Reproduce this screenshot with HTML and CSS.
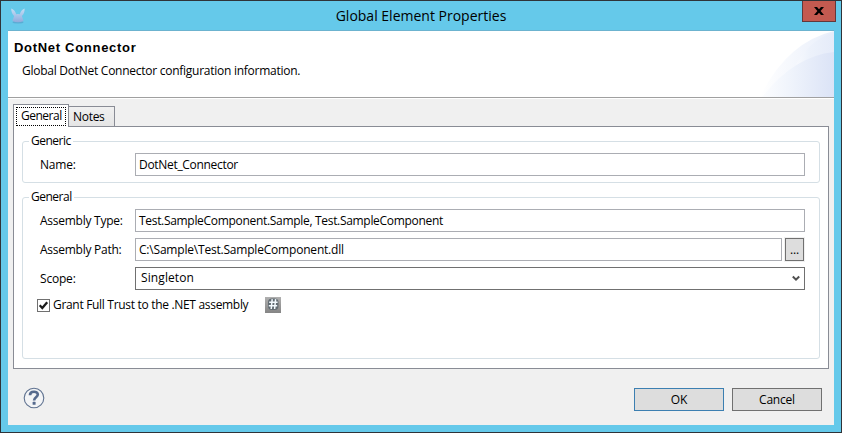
FILE: index.html
```html
<!DOCTYPE html>
<html lang="en">
<head>
<meta charset="utf-8">
<title>Global Element Properties</title>
<link rel="stylesheet" href="styles.css">
</head>
<body>
<div class="window">
  <header class="titlebar">
    <svg class="app-icon" width="16" height="16" viewBox="0 0 16 16">
      <defs><linearGradient id="mule" x1="0" y1="0" x2="0" y2="1"><stop offset="0" stop-color="#c3def6"/><stop offset="1" stop-color="#8fabdc"/></linearGradient></defs>
      <ellipse cx="8" cy="14.2" rx="5.5" ry="1.2" fill="#5299c4" opacity=".6"/>
      <path d="M1.2 .6C1.2 3.6 2.2 6.5 4.1 8L2.4 13Q8 15.5 13.6 13L11.9 8C13.8 6.5 14.8 3.6 14.6 .6C12 1.6 10.5 4 9.8 6.2Q8 5.6 6.2 6.2C5.5 4 4 1.6 1.2 .6Z" fill="url(#mule)"/>
    </svg>
    <h1 class="title">Global Element Properties</h1>
    <button class="close" aria-label="Close"><svg width="10" height="8" viewBox="0 0 10 8"><path d="M0 0H3L5 2.3L7 0H10L6.6 4L10 8H7L5 5.7L3 8H0L3.4 4Z" fill="#000"/></svg></button>
  </header>
  <main class="client">
    <section class="banner">
      <div>
        <h2 class="heading">DotNet Connector</h2>
        <p class="message">Global DotNet Connector configuration information.</p>
      </div>
      <svg class="swoosh" width="74" height="66" viewBox="0 0 74 66">
        <defs>
          <linearGradient id="g1"><stop offset="0" stop-color="#fff"/><stop offset="1" stop-color="#e8eefa"/></linearGradient>
          <linearGradient id="g2"><stop offset="0" stop-color="#fff"/><stop offset=".5" stop-color="#edf2fb"/><stop offset="1" stop-color="#e5ebf9"/></linearGradient>
          <linearGradient id="g3"><stop offset="0" stop-color="#fcfdff"/><stop offset=".35" stop-color="#f1f5fc"/><stop offset="1" stop-color="#dbe3f6"/></linearGradient>
        </defs>
        <path d="M0 66Q27 11 74 0V66Z" fill="url(#g1)"/>
        <path d="M25 66Q35 14 74 1V66Z" fill="url(#g2)"/>
        <path d="M2 66Q34 25 74 21V66Z" fill="url(#g3)"/>
      </svg>
    </section>
    <section class="body">
      <nav class="tabs">
        <div class="tab active"><span class="focus">General</span></div>
        <div class="tab"><span>Notes</span></div>
      </nav>
      <div class="pane">
        <fieldset class="group generic">
          <legend>Generic</legend>
          <label class="label">Name:</label>
          <div class="field tight">DotNet_Connector</div>
        </fieldset>
        <fieldset class="group general">
          <legend>General</legend>
          <label class="label snug">Assembly Type:</label>
          <div class="field tight">Test.SampleComponent.Sample, Test.SampleComponent</div>
          <label class="label snug">Assembly Path:</label>
          <div class="browse-row">
            <div class="field">C:\Sample\Test.SampleComponent.dll</div>
            <button class="browse">...</button>
          </div>
          <label class="label">Scope:</label>
          <div class="field combo"><span>Singleton</span>
            <svg width="8" height="7" viewBox="0 0 8 7"><path d="M.8 1.5L4 4.7L7.2 1.5" fill="none" stroke="#505050" stroke-width="2"/></svg>
          </div>
          <div class="check-row">
            <svg width="13" height="13" viewBox="0 0 13 13"><rect x=".5" y=".5" width="12" height="12" fill="#fff" stroke="#707070"/><path d="M2.7 6.3L5.3 9L10.2 3.3" fill="none" stroke="#1c1c1c" stroke-width="2.3"/></svg>
            <span class="check-label tight">Grant Full Trust to the .NET assembly</span>
            <svg class="hash" width="16" height="16" viewBox="0 0 16 16"><defs><linearGradient id="hg" x1="0" y1="0" x2="0" y2="1"><stop offset="0" stop-color="#b0b0b0"/><stop offset="1" stop-color="#858585"/></linearGradient></defs><rect width="16" height="16" fill="url(#hg)"/><rect x="3" y="1.5" width="10.5" height="11.5" rx="4" fill="#626c73"/><path d="M7.2 2.2L6.2 12M10.6 2.2L9.6 12M4.2 5.2H12.6M3.8 8.8H12.2" stroke="#f2faff" stroke-width="1.5" fill="none"/></svg>
          </div>
        </fieldset>
      </div>
    </section>
    <footer class="footer">
      <svg class="help" width="22" height="22" viewBox="0 0 22 22"><circle cx="11" cy="11" r="9.8" fill="#f3f4f6" stroke="#5f7290" stroke-width="1.1"/><path d="M7 8.2C7 3.7 14.8 3.7 14.8 7.6C14.8 10.2 11.1 10.3 11.1 13.4" fill="none" stroke="#566a8d" stroke-width="2.7"/><rect x="9.6" y="14.8" width="3" height="3" rx=".6" fill="#566a8d"/></svg>
      <button class="btn default">OK</button>
      <button class="btn">Cancel</button>
    </footer>
  </main>
</div>
</body>
</html>
```
FILE: styles.css
```css
* { box-sizing: border-box; }
body { margin: 0; font: 12px/16px "Open Sans", "Noto Sans", sans-serif; color: #000; letter-spacing: -0.2px; }
h1, h2, p { margin: 0; font-weight: 400; }
button { font: inherit; letter-spacing: inherit; color: #000; padding: 0; margin: 0; border-radius: 0; display: flex; align-items: center; justify-content: center; }
svg { display: block; flex: none; }
span { white-space: nowrap; }

.window { width: 842px; height: 433px; background: #65c9ea; border: 1px solid #2f3338; padding: 0 7px 7px; }
.titlebar { height: 30px; display: flex; align-items: flex-start; border-bottom: 1px solid #6cb3cf; }
.app-icon { margin: 7px 0 0 2px; }
.title { flex: 1; text-align: center; font-size: 14px; line-height: 30px; margin-left: 14px; letter-spacing: 0; }
.close { width: 34px; height: 21px; margin-right: -2px; background: #c35a50; border: 1px solid #63383a; border-top: 0; }

.client { height: 394px; background: #f0f0f0; display: flex; flex-direction: column; }
.banner { height: 68px; background: #fff; border-bottom: 1px solid #fff; box-shadow: inset 0 -1px #a0a0a0; display: flex; justify-content: space-between; flex: none; }
.heading { font: bold 13px/16px "Liberation Sans", Arial, sans-serif; letter-spacing: 0.7px; margin: 9px 0 0 6px; }
.message { margin: 7px 0 0 14px; letter-spacing: -0.26px; }

.body { padding: 5px 5px 0; }
.tabs { height: 22px; display: flex; align-items: flex-end; }
.tab { width: 46px; height: 20px; border: 1px solid #898c95; border-left: 0; border-bottom: 0; padding: 2px 0 0 4px; background: linear-gradient(#f0f0f0, #e5e5e5); letter-spacing: -0.3px; }
.tab.active { width: 56px; height: 23px; border-left: 1px solid #898c95; border-bottom: 0; background: #fff; padding: 2px; margin-bottom: -1px; position: relative; letter-spacing: -0.5px; }
.focus { display: block; height: 19px; border: 1px dotted #000; padding-left: 4px; line-height: 15px; }
.pane { height: 243px; border: 1px solid #898c95; background: #fff; padding: 7px 8px 0; }

.group { margin: 0; border: 1px solid #d5dfe5; border-radius: 3px; min-width: 0; padding: 0 14px 0 14px; display: grid; grid-template-columns: 98px 1fr; row-gap: 6px; align-content: start; }
.group legend { padding: 0 2px; margin-left: -8px; height: 14px; line-height: 14px; letter-spacing: -0.5px; }
.generic { height: 49px; padding-top: 5px; }
.general { height: 169px; padding-top: 5px; margin-top: 7px; }
.label { padding-left: 3px; line-height: 23px; }
.snug { letter-spacing: -0.26px; }
.field { height: 23px; border: 1px solid #abadb3; padding-left: 3px; line-height: 21px; background: #fff; min-width: 0; white-space: nowrap; }
.tight { letter-spacing: -0.31px; }
.browse-row { display: grid; grid-template-columns: 1fr 20px; column-gap: 3px; }
.browse { width: 19px; height: 23px; background: #ddd; border: 1px solid #707070; box-shadow: 0 0 0 1px #f0f0f0; }
.combo { border-color: #707070; display: flex; align-items: center; justify-content: space-between; padding: 0 4px 0 5px; line-height: 19px; letter-spacing: 0.1px; }
.combo span { margin-top: -2px; }
.check-row { grid-column: 1 / 3; display: flex; align-items: center; height: 18px; }
.check-label { width: 212px; margin-left: 3px; }

.footer { display: flex; align-items: flex-start; padding: 19px 12px 0 15px; }
.help { margin: -1px auto 0 0; }
.btn { width: 90px; height: 23px; background: #ddd; border: 1px solid #707070; margin-left: 8px; }
.btn.default { border-color: #3c7fb1; }
```
